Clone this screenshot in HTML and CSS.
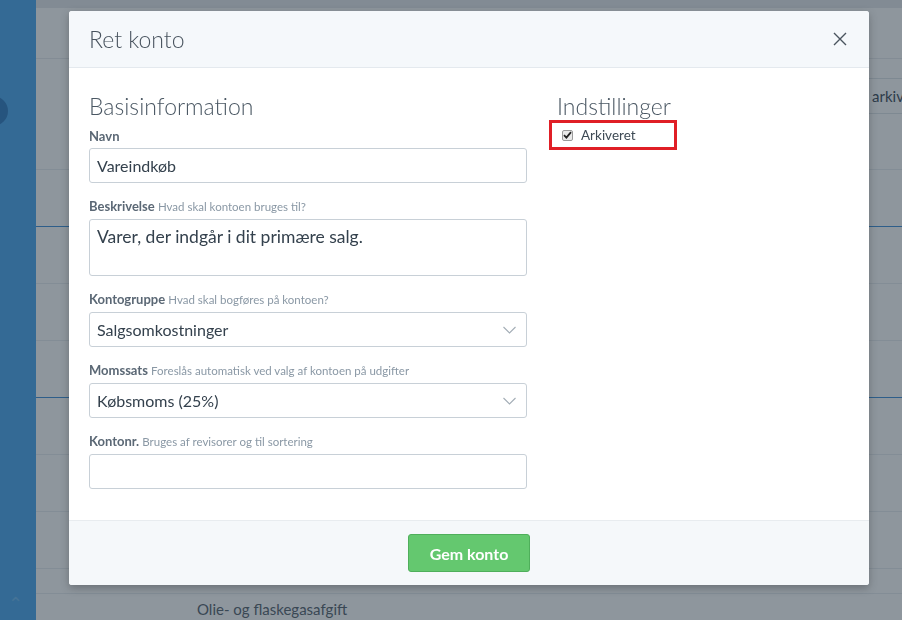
FILE: index.html
```html
<!DOCTYPE html>
<html lang="da">
<head>
  <meta charset="UTF-8" />
  <meta name="viewport" content="width=device-width, initial-scale=1.0"/>
  <title>Ret konto</title>
  <link rel="stylesheet" href="styles.css">
</head>
<body>
  <div class="app">
    <div class="sidebar">
      <span class="sidebar-dot"></span>
      <span class="sidebar-up">&#8963;</span>
    </div>
    <div class="page">
      <div class="page-top"></div>
      <div class="toolbar">
        <span class="toolbar-btn">arkiv</span>
      </div>
      <div class="table">
        <div class="row"></div>
        <div class="row row-blue"></div>
        <div class="row"></div>
        <div class="row"></div>
        <div class="row row-blue"></div>
        <div class="row"></div>
        <div class="row"></div>
        <div class="row"></div>
        <div class="row row-short"></div>
        <div class="row-last"><span class="row-name">Olie- og flaskegasafgift</span></div>
      </div>
    </div>
  </div>

  <div class="backdrop"></div>

  <div class="modal-wrap">
    <div class="modal">
      <div class="modal-header">
        <h2 class="modal-title">Ret konto</h2>
        <button class="close" type="button" aria-label="Luk">
          <svg width="14" height="14" viewBox="0 0 14 14"><path d="M1 1L13 13M13 1L1 13" stroke="#4a545e" stroke-width="1.4" fill="none"/></svg>
        </button>
      </div>

      <div class="modal-body">
        <div class="col-main">
          <h3 class="section-title">Basisinformation</h3>

          <div class="field">
            <label class="field-label">Navn</label>
            <div class="input">Vareindkøb</div>
          </div>

          <div class="field">
            <label class="field-label">Beskrivelse <span class="hint">Hvad skal kontoen bruges til?</span></label>
            <div class="input textarea">Varer, der indgår i dit primære salg.</div>
          </div>

          <div class="field">
            <label class="field-label">Kontogruppe <span class="hint">Hvad skal bogføres på kontoen?</span></label>
            <div class="input select">
              <span>Salgsomkostninger</span>
              <svg width="13" height="8" viewBox="0 0 13 8"><path d="M0.5 1L6.5 7L12.5 1" stroke="#a3adb6" stroke-width="1.1" fill="none"/></svg>
            </div>
          </div>

          <div class="field">
            <label class="field-label">Momssats <span class="hint">Foreslås automatisk ved valg af kontoen på udgifter</span></label>
            <div class="input select">
              <span>Købsmoms (25%)</span>
              <svg width="13" height="8" viewBox="0 0 13 8"><path d="M0.5 1L6.5 7L12.5 1" stroke="#a3adb6" stroke-width="1.1" fill="none"/></svg>
            </div>
          </div>

          <div class="field">
            <label class="field-label">Kontonr. <span class="hint">Bruges af revisorer og til sortering</span></label>
            <div class="input"></div>
          </div>
        </div>

        <div class="col-side">
          <h3 class="section-title">Indstillinger</h3>
          <label class="check-row">
            <span class="check">
              <svg width="9" height="8" viewBox="0 0 9 8"><path d="M1 4.2L3.4 6.6L8 1.2" stroke="#222" stroke-width="1.8" fill="none"/></svg>
            </span>
            Arkiveret
          </label>
        </div>
      </div>

      <div class="modal-footer">
        <button class="btn-save" type="button">Gem konto</button>
      </div>
    </div>
  </div>
</body>
</html>
```

FILE: styles.css
```css
html, body {
  margin: 0;
  padding: 0;
  height: 100%;
  overflow: hidden;
}

body {
  font-family: "Lato", "Open Sans", sans-serif;
  color: #3b4650;
}

/* background page */
.app {
  display: flex;
  height: 100vh;
  overflow: hidden;
}

.sidebar {
  width: 36px;
  background: #4aa7ee;
  position: relative;
}

.sidebar-dot {
  position: absolute;
  left: -22px;
  top: 96px;
  width: 30px;
  height: 30px;
  border-radius: 50%;
  background: #2f7ac0;
}

.sidebar-up {
  position: absolute;
  left: 8px;
  bottom: 6px;
  font-size: 18px;
  color: #6cb8f2;
}

.page {
  flex: 1;
  background: #fff;
  display: flex;
  flex-direction: column;
  overflow: hidden;
}

.page > div {
  flex-shrink: 0;
}

.page-top {
  height: 8px;
  background: #e6e9ec;
}

.toolbar {
  height: 50px;
  border-bottom: 1px solid #e8ebee;
  position: relative;
}

.toolbar-btn {
  position: absolute;
  right: 0;
  top: 70px;
  width: 30px;
  height: 34px;
  line-height: 34px;
  padding-left: 8px;
  font-size: 15px;
  color: #3c4a58;
  background: #fff;
  border: 1px solid #dfe4e8;
  border-right: 0;
  border-radius: 4px 0 0 4px;
  overflow: hidden;
  white-space: nowrap;
}

.table {
  margin-top: 54px;
}

.row {
  height: 56px;
  border-bottom: 1px solid #e9edf0;
}

.row-blue {
  border-bottom-color: #3f8fd8;
}

.row-short {
  height: 24px;
}

.row-last {
  padding: 5px 0 0 161px;
}

.row-name {
  font-size: 15px;
  line-height: 20px;
  color: #56626d;
}

.backdrop {
  position: fixed;
  inset: 0;
  background: rgba(30, 45, 60, 0.5);
}

/* modal */
.modal-wrap {
  position: fixed;
  inset: 0;
  padding: 11px 0 0 69px;
}

.modal {
  width: 800px;
  background: #fff;
  border-radius: 3px;
  box-shadow: 0 3px 8px rgba(0, 0, 0, 0.25);
  overflow: hidden;
}

.modal-header {
  height: 56px;
  background: #f5f8fb;
  border-bottom: 1px solid #e4e9ee;
  display: flex;
  align-items: center;
  justify-content: space-between;
  padding: 0 20px;
}

.modal-title {
  margin: 0;
  font-size: 23px;
  font-weight: 300;
  color: #48535e;
}

.close {
  background: none;
  border: 0;
  padding: 0;
  margin-right: 2px;
  width: 14px;
  height: 14px;
  display: flex;
  cursor: pointer;
}

.modal-body {
  display: flex;
  gap: 30px;
  padding: 23px 20px 18px;
}

.col-main {
  width: 438px;
}

.col-side {
  flex: 1;
}

.section-title {
  margin: 0 0 5px;
  font-size: 23px;
  line-height: 30px;
  font-weight: 300;
  color: #4a5763;
}

.field {
  margin-bottom: 13px;
}

.field-label {
  display: block;
  font-size: 13px;
  line-height: 20px;
  font-weight: 700;
  color: #5b6875;
  margin-bottom: 2px;
}

.hint {
  font-size: 11.5px;
  font-weight: 400;
  color: #8a98a5;
}

.input {
  box-sizing: border-box;
  height: 35px;
  border: 1px solid #c8d0d7;
  border-radius: 3px;
  padding: 0 7px;
  font-size: 16px;
  line-height: 33px;
  color: #34414d;
}

.textarea {
  height: 57px;
  font-size: 17.5px;
  line-height: 24px;
  padding-top: 5px;
}

.select {
  display: flex;
  align-items: center;
  justify-content: space-between;
  padding-right: 10px;
}

.check-row {
  box-sizing: border-box;
  display: flex;
  align-items: center;
  gap: 8px;
  width: 128px;
  height: 30px;
  margin: -6px 0 0 -8px;
  padding-left: 10px;
  border: 3px solid #e01f26;
  font-size: 13.5px;
  color: #3d4954;
}

.check {
  box-sizing: border-box;
  width: 11px;
  height: 11px;
  border: 1px solid #9a9a9a;
  border-radius: 2px;
  background: #e9e9e9;
  display: flex;
  align-items: center;
  justify-content: center;
}

.modal-footer {
  height: 64px;
  background: #f5f8fa;
  border-top: 1px solid #e8ecef;
  display: flex;
  justify-content: center;
  align-items: center;
}

.btn-save {
  width: 122px;
  height: 38px;
  background: #64c86f;
  border: 1px solid #4faf5b;
  border-radius: 3px;
  color: #fff;
  font-family: inherit;
  font-size: 16px;
  font-weight: 700;
  cursor: pointer;
}
```
